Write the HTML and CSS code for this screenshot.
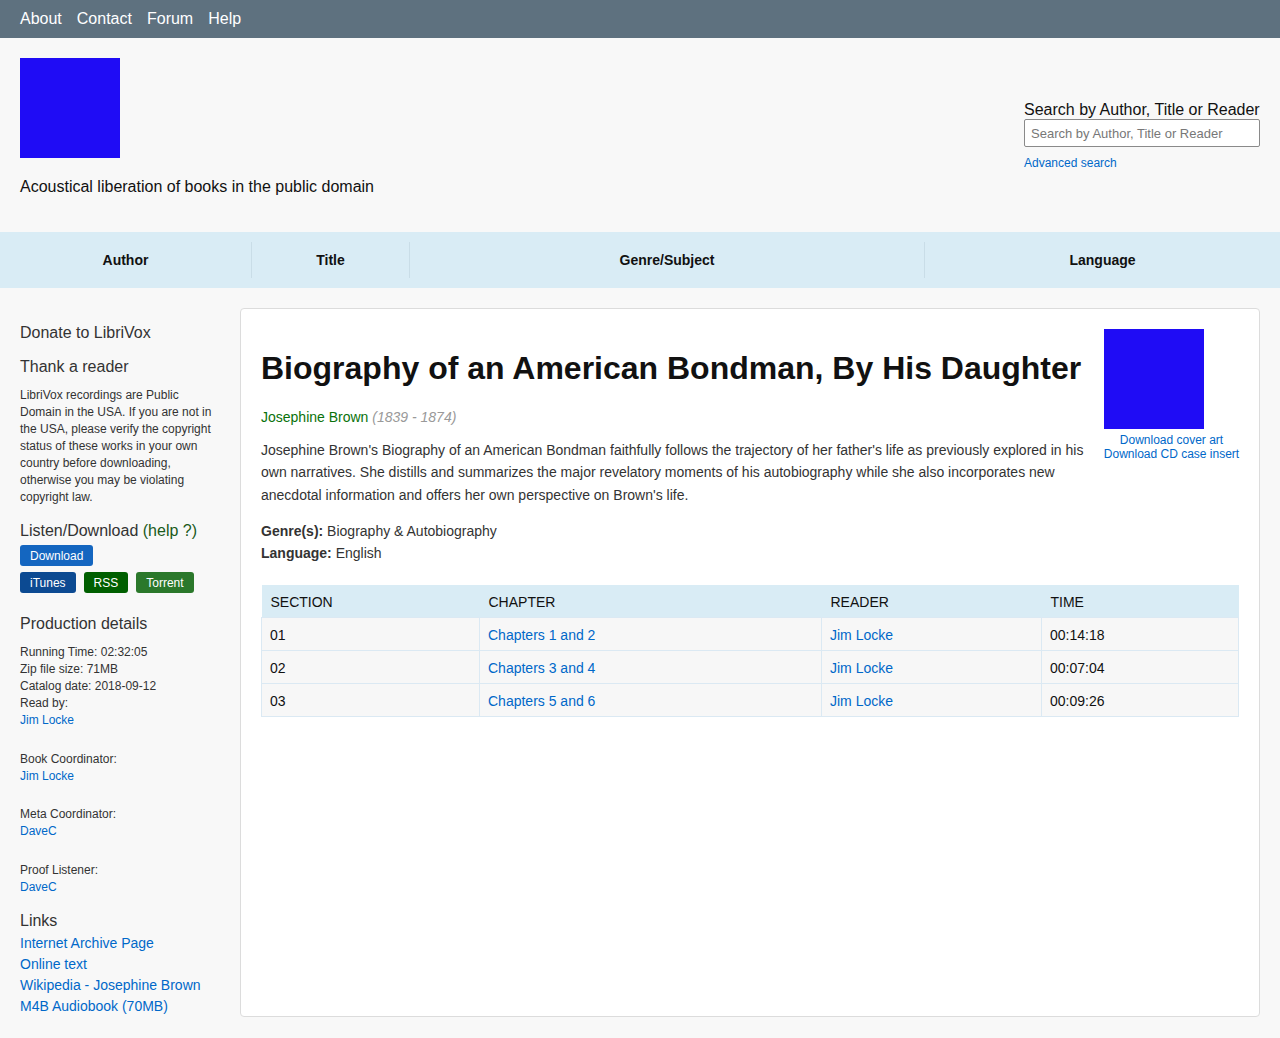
FILE: index.html
```html
<!DOCTYPE html>
<html lang="en">
<head>
<meta charset="utf-8">
<title>Biography of an American Bondman, By His Daughter - LibriVox</title>
<link rel="stylesheet" href="styles.css">
</head>
<body>
<nav class="topnav">
  <a href="#">About</a>
  <a href="#">Contact</a>
  <a href="#">Forum</a>
  <a href="#">Help</a>
</nav>

<header class="header">
  <div class="brand">
    <div class="logo"></div>
    <p class="tagline">Acoustical liberation of books in the public domain</p>
  </div>
  <form class="search">
    <label class="search-label" for="q">Search by Author, Title or Reader</label>
    <input class="search-input" id="q" type="text" placeholder="Search by Author, Title or Reader">
    <a class="adv" href="#">Advanced search</a>
  </form>
</header>

<div class="catbar">
  <div class="cat cat-author">Author</div>
  <div class="cat cat-title">Title</div>
  <div class="cat cat-genre">Genre/Subject</div>
  <div class="cat cat-lang">Language</div>
</div>

<main class="main">
  <aside class="sidebar">
    <h4 class="s-donate">Donate to LibriVox</h4>
    <h4 class="s-thank">Thank a reader</h4>
    <p class="s-note">LibriVox recordings are Public Domain in the USA. If you are not in the USA, please verify the copyright status of these works in your own country before downloading, otherwise you may be violating copyright law.</p>
    <h4 class="s-listen">Listen/Download <a class="help" href="#">(help ?)</a></h4>
    <div class="btnrow first"><a class="btn btn-dl" href="#">Download</a></div>
    <div class="btnrow"><a class="btn btn-itunes" href="#">iTunes</a><a class="btn btn-rss" href="#">RSS</a><a class="btn btn-torrent" href="#">Torrent</a></div>
    <h4 class="s-prod">Production details</h4>
    <div class="details">
      <div>Running Time: 02:32:05</div>
      <div>Zip file size: 71MB</div>
      <div>Catalog date: 2018-09-12</div>
      <div>Read by:</div>
      <div><a href="#">Jim Locke</a></div>
    </div>
    <div class="details gap">
      <div>Book Coordinator:</div>
      <div><a href="#">Jim Locke</a></div>
    </div>
    <div class="details gap">
      <div>Meta Coordinator:</div>
      <div><a href="#">DaveC</a></div>
    </div>
    <div class="details gap">
      <div>Proof Listener:</div>
      <div><a href="#">DaveC</a></div>
    </div>
    <h4 class="s-links">Links</h4>
    <ul class="links">
      <li><a href="#">Internet Archive Page</a></li>
      <li><a href="#">Online text</a></li>
      <li><a href="#">Wikipedia - Josephine Brown</a></li>
      <li><a href="#">M4B Audiobook (70MB)</a></li>
    </ul>
  </aside>

  <section class="card">
    <div class="card-top">
      <div class="info">
        <h1 class="title">Biography of an American Bondman, By His Daughter</h1>
        <p class="author"><a href="#">Josephine Brown</a> <span class="dates">(1839 - 1874)</span></p>
        <p class="desc">Josephine Brown's Biography of an American Bondman faithfully follows the trajectory of her father's life as previously explored in his own narratives. She distills and summarizes the major revelatory moments of his autobiography while she also incorporates new anecdotal information and offers her own perspective on Brown's life.</p>
        <p class="meta"><b>Genre(s):</b> Biography &amp; Autobiography<br><b>Language:</b> English</p>
      </div>
      <div class="cover">
        <div class="cover-img"></div>
        <a href="#">Download cover art</a>
        <a href="#">Download CD case insert</a>
      </div>
    </div>
    <table class="chapters">
      <thead>
        <tr><th class="c1">SECTION</th><th class="c2">CHAPTER</th><th class="c3">READER</th><th class="c4">TIME</th></tr>
      </thead>
      <tbody>
        <tr><td>01</td><td><a href="#">Chapters 1 and 2</a></td><td><a href="#">Jim Locke</a></td><td>00:14:18</td></tr>
        <tr><td>02</td><td><a href="#">Chapters 3 and 4</a></td><td><a href="#">Jim Locke</a></td><td>00:07:04</td></tr>
        <tr><td>03</td><td><a href="#">Chapters 5 and 6</a></td><td><a href="#">Jim Locke</a></td><td>00:09:26</td></tr>
      </tbody>
    </table>
  </section>
</main>
</body>
</html>
```

FILE: styles.css
```css
* { box-sizing: border-box; }
html, body { margin: 0; padding: 0; }
body {
  background: #f8f8f8;
  font-family: "Liberation Sans", Arial, Helvetica, sans-serif;
  color: #111;
}
a { text-decoration: none; color: #0068c9; }

.topnav {
  height: 38px;
  background: #5e717f;
  display: flex;
  align-items: center;
  gap: 15px;
  padding: 0 20px;
}
.topnav a { color: #fff; font-size: 16px; }

.header {
  display: flex;
  justify-content: space-between;
  padding: 20px 20px 0 20px;
  height: 194px;
}
.logo { width: 100px; height: 100px; background: #1f0cf5; }
.tagline { margin: 20px 0 0 0; font-size: 16px; line-height: 18px; color: #111; }

.search { display: flex; flex-direction: column; width: 236px; margin-top: 43px; }
.search-label { font-size: 16px; line-height: 18px; color: #111; white-space: nowrap; }
.search-input {
  margin-top: 0;
  height: 28px;
  width: 236px;
  border: 1px solid #8a8a8a;
  border-radius: 2px;
  background: #fff;
  padding: 0 6px;
  font-family: inherit;
  font-size: 13px;
}
.search-input::placeholder { color: #777; }
.adv { margin-top: 9px; font-size: 12px; line-height: 14px; }

.catbar {
  display: flex;
  height: 56px;
  background: #d9ecf5;
  padding: 10px 0;
}
.cat {
  display: flex;
  align-items: center;
  justify-content: center;
  font-size: 14px;
  font-weight: bold;
  color: #111;
}
.cat + .cat { border-left: 1px solid #c9dde7; }
.cat-author { width: 251px; }
.cat-title { width: 158px; }
.cat-genre { width: 515px; }
.cat-lang { flex: 1; }

.main {
  display: flex;
  gap: 20px;
  padding: 20px 20px 21px 20px;
}
.sidebar { width: 200px; flex-shrink: 0; color: #333; }
.sidebar h4 { font-size: 16px; line-height: 18px; font-weight: normal; margin: 0; color: #333; }
.s-donate { margin-top: 16px !important; }
.s-thank { margin-top: 16px !important; }
.s-note { font-size: 12px; line-height: 17px; margin: 11px 0 0 0; color: #333; }
.s-listen { margin-top: 16px !important; }
.help { color: #1a5a1a; }
.btnrow { display: flex; gap: 8px; margin-top: 6px; }
.btnrow.first { margin-top: 5px; }
.btn {
  display: inline-block;
  height: 21px;
  line-height: 22px;
  padding: 0 10px;
  border-radius: 3px;
  font-size: 12px;
  color: #fff;
}
.btn-dl { background: #1466c0; }
.btn-itunes { background: #0c4a92; }
.btn-rss { background: #005f00; }
.btn-torrent { background: #2b782b; }
.s-prod { margin-top: 22px !important; }
.details { font-size: 12px; line-height: 17px; margin-top: 11px; color: #333; }
.details.gap { margin-top: 21.5px; }
.s-links { margin-top: 16.5px !important; }
.links { list-style: none; margin: 3px 0 0 0; padding: 0; font-size: 14px; line-height: 21px; }

.card {
  flex: 1;
  background: #fff;
  border: 1px solid #dcdcdc;
  border-radius: 4px;
  padding: 20px 20px 20px 20px;
  min-height: 709px;
}
.card-top { display: flex; gap: 8px; }
.info { flex: 1; min-width: 0; }
.title {
  font-size: 32px;
  line-height: 37px;
  font-weight: bold;
  margin: 20.5px 0 0 0;
  color: #111;
  white-space: nowrap;
}
.author { margin: 22.5px 0 0 0; font-size: 14px; line-height: 16px; }
.author a { color: #0a720a; }
.dates { color: #999; font-style: italic; }
.desc { margin: 13.5px 0 0 0; font-size: 14px; line-height: 22.5px; color: #333; }
.meta { margin: 13.5px 0 0 0; font-size: 14px; line-height: 22px; color: #333; }
.meta b { color: #333; }

.cover {
  width: 135px;
  flex-shrink: 0;
  display: flex;
  flex-direction: column;
  align-items: center;
  font-size: 12px;
  line-height: 14px;
  white-space: nowrap;
}
.cover-img { width: 100px; height: 100px; background: #1f0cf5; align-self: flex-start; margin-bottom: 4px; }

.chapters {
  width: 100%;
  border-collapse: collapse;
  margin-top: 21px;
  font-size: 14px;
}
.chapters th {
  background: #d9ecf5;
  text-align: left;
  font-weight: normal;
  height: 33px;
  padding: 3px 9px 0 9px;
  color: #111;
}
.chapters td {
  background: #f7f7f7;
  border: 1px solid #dbe9f3;
  height: 33px;
  padding: 2px 8px 0 8px;
  color: #111;
}
.chapters .c1 { width: 218px; }
.chapters .c2 { width: 342px; }
.chapters .c3 { width: 220px; }
```
